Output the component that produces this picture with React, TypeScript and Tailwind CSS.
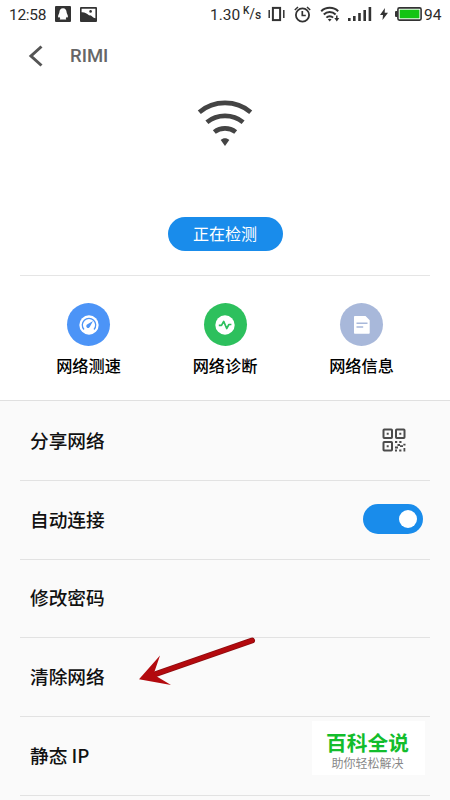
import React from 'react';

function StatusBar() {
  return (
    <div className="flex h-7 items-center pl-[9px] pr-2 text-[#2b2b2b] font-['Roboto','Noto_Sans_CJK_SC',sans-serif]">
      <span className="w-[46px] pt-px text-[15.5px] leading-7 tracking-[-0.3px]">12:58</span>
      <svg className="h-4 w-4" viewBox="0 0 16 16">
        <rect width="16" height="16" rx="1" fill="#333" />
        <path d="M8 2.200c2.300 0 3.600 1.700 3.600 4 0 1.400 1.700 3 1.300 5-.2.7-.8 0-1.200-.5-.2.8-.5 1.300-1 1.700.8.5.8 1.200-.2 1.200h-5c-1 0-1-.7-.2-1.200-.5-.4-.8-.9-1-1.700-.4.5-1 1.200-1.200.5-.4-2 1.300-3.600 1.300-5 0-2.300 1.300-4 3.600-4z" fill="#fff" />
      </svg>
      <svg className="ml-[9px] h-[15px] w-[17px]" viewBox="0 0 17 15">
        <rect width="17" height="15" rx="1" fill="#333" />
        <path d="M1.600 1.700h13.800v9.600C12.500 11 11.500 7.500 9.300 8.500 7 6.500 4.500 5 1.600 5.300z" fill="#fff" />
        <circle cx="10.600" cy="4.400" r="1.300" fill="#333" />
      </svg>
      <div className="ml-auto flex items-center">
        <span className="w-[33px] pt-px text-[15.5px] leading-7">1.30</span>
        <span className="flex w-[25px] text-[10px] leading-7">
          <span className="-translate-y-[3px] font-medium">K</span>
          <span className="text-[14px]">/</span>
          <span className="translate-y-[1px] text-[12px] font-medium">s</span>
        </span>
        <svg className="h-4 w-[17px]" viewBox="0 0 17 16" fill="none" stroke="#333">
          <rect x="4.900" y="1.900" width="7.200" height="12.200" strokeWidth="2" />
          <path d="M1.200 4v8M15.800 4v8" strokeWidth="1.500" />
        </svg>
        <svg className="ml-[9px] h-[17px] w-[17px]" viewBox="0 0 17 17" fill="none" stroke="#333">
          <circle cx="8.500" cy="9" r="6.600" strokeWidth="1.800" />
          <path d="M8.300 5v4.500h3.500" strokeWidth="1.700" />
          <path d="M.8 4 4 1M16.200 4 13 1" strokeWidth="1.500" />
        </svg>
        <svg className="ml-[9px] h-4 w-[21px]" viewBox="0 0 21 16" fill="none" stroke="#333">
          <path d="M1.200 5.200c4.600-4.600 12.400-4.600 17 0M3.800 8.500c3.300-3.300 8.500-3.300 11.800 0M6.400 11.600c1.900-1.900 4.800-1.900 6.700 0" strokeWidth="2" />
          <path d="m7.800 13.300 1.900 2.300 1.900-2.300q-1.900-1.300-3.800 0z" fill="#333" stroke="none" />
          <path d="M16.800 9.500v3.500" strokeWidth="1.500" />
          <path d="M14.300 12h5l-2.500 3.400z" fill="#333" stroke="none" />
        </svg>
        <svg className="ml-[7px] h-[14px] w-6" viewBox="0 0 24 14" fill="#333">
          <rect x="0" y="11" width="2.600" height="3" />
          <rect x="5" y="9" width="2.600" height="5" />
          <rect x="10.200" y="6" width="2.600" height="8" />
          <rect x="15.400" y="3" width="2.600" height="11" />
          <rect x="20.600" y="0" width="2.600" height="14" />
        </svg>
        <svg className="ml-[8px] h-3 w-2" viewBox="0 0 8 12" fill="#333">
          <path d="M4.900 0 0 7h3L2.500 12 8 4.700H4.700z" />
        </svg>
        <svg className="ml-[7px] h-[14px] w-[27px]" viewBox="0 0 27 14">
          <rect x="0" y="4" width="3" height="6" rx="1" fill="#333" />
          <rect x="2.900" y=".9" width="23.200" height="12.200" rx="1.500" fill="#fff" stroke="#333" strokeWidth="1.600" />
          <rect x="4.700" y="2.700" width="19.700" height="8.600" fill="#13c413" />
        </svg>
        <span className="ml-[2px] w-[18px] pt-px text-[15.5px] leading-7">94</span>
      </div>
    </div>
  );
}

function WifiIcon() {
  return (
    <svg className="h-12 w-14" viewBox="0 0 56 48" fill="none" stroke="#444" strokeWidth="4.700">
      <path d="M2.300 12.200C17-.2 39-.2 53.700 12.200" />
      <path d="M9.900 22.300c10.300-8.500 25.900-8.500 36.200 0" />
      <path d="M17.300 32c6.300-4.900 15.100-4.900 21.400 0" />
      <path d="M23.700 40c2.400-2.300 6.200-2.300 8.600 0L28 46z" fill="#444" stroke="none" />
    </svg>
  );
}

function SpeedIcon() {
  return (
    <svg className="h-5 w-5" viewBox="0 0 20 20" fill="none">
      <circle cx="10" cy="10" r="9.700" fill="#fff" />
      <path d="M5 14.500A6.700 6.700 0 1 1 15 14.500" stroke="#4c94f7" strokeWidth="1.300" />
      <path d="m14 5.900-3 5.700a1.900 1.900 0 1 1-2.500-2.300z" fill="#4c94f7" />
    </svg>
  );
}

function DiagnoseIcon() {
  return (
    <svg className="h-5 w-5" viewBox="0 0 20 20" fill="none">
      <circle cx="10" cy="10" r="9.700" fill="#fff" />
      <path d="M3.800 10.400h2.700l2.200-4 3 7.100 2.200-4h2.500" stroke="#2dc05d" strokeWidth="1.700" strokeLinejoin="round" />
    </svg>
  );
}

function InfoIcon() {
  return (
    <svg className="h-5 w-5" viewBox="0 0 20 20" fill="none">
      <path d="M2.800 1h10.700l4.200 4.300V18a.8.8 0 0 1-.8.800H2.800A.8.800 0 0 1 2 18V1.800A.8.800 0 0 1 2.800 1z" fill="#fff" />
      <path d="M4.500 8.300h11M4.500 12h6.700" stroke="#a8b8da" strokeWidth="1.500" />
    </svg>
  );
}

function QrIcon() {
  return (
    <svg className="h-6 w-6" viewBox="0 0 24 24" fill="none" stroke="#4b4b4b" strokeWidth="2">
      <rect x="1.500" y="1.500" width="8.500" height="8.500" rx=".7" />
      <rect x="14" y="1.500" width="8.500" height="8.500" rx=".7" />
      <rect x="1.500" y="14" width="8.500" height="8.500" rx=".7" />
      <path d="M4.700 5.700h2M17.300 5.700h2M4.700 18.200h2" />
      <path d="M13 14h2.200M17.300 14h2.200M21.300 16.700h2.200M15.500 17h2.500M18 18.200h3M13 19.500h3M13 22.500h2M17.200 22.500h2.200M22.400 20v3.500" strokeWidth="1.800" />
    </svg>
  );
}

const tools = [
  { label: '网络测速', color: 'bg-[#4c94f7]', icon: <SpeedIcon /> },
  { label: '网络诊断', color: 'bg-[#2dc05d]', icon: <DiagnoseIcon /> },
  { label: '网络信息', color: 'bg-[#a8b8da]', icon: <InfoIcon /> },
];

interface RowProps {
  label: string;
  children?: React.ReactNode;
}

function Row({ label, children }: RowProps) {
  return (
    <div className="mx-5 flex h-[78.8px] items-center justify-between border-b border-[#e2e2e2] pb-[2px] pl-[10px]">
      <span className="text-[18.7px] font-medium leading-7 text-[#111]">{label}</span>
      {children}
    </div>
  );
}

export default function App() {
  return (
    <div className="relative h-[800px] w-[450px] overflow-hidden bg-white font-['Noto_Sans_CJK_SC',sans-serif]">
      <StatusBar />

      <header className="flex h-14 items-center pl-7">
        <svg className="h-[22px] w-4" viewBox="0 0 16 22" fill="none" stroke="#555" strokeWidth="3">
          <path d="M13.500 1.500 3 11l10.500 9.500" />
        </svg>
        <h1 className="ml-[26px] font-['Roboto',sans-serif] text-[18.5px] font-medium leading-7 text-[#666]">RIMI</h1>
      </header>

      <div className="flex flex-col items-center pt-4">
        <WifiIcon />
        <button className="mt-[69px] h-[34px] w-[115px] rounded-full bg-[#198ceb] pb-px text-base leading-[33px] text-white">
          正在检测
        </button>
      </div>

      <div className="mx-5 mt-[24px] flex h-[125px] justify-between border-t border-[#e5e5e5] px-9 pt-[27px]">
        {tools.map((tool) => (
          <div key={tool.label} className="flex w-[65px] flex-col items-center">
            <div className={`flex h-[43px] w-[43px] items-center justify-center rounded-full ${tool.color}`}>{tool.icon}</div>
            <span className="mt-[5px] whitespace-nowrap text-[16.2px] font-medium leading-7 text-black">{tool.label}</span>
          </div>
        ))}
      </div>

      <div className="h-[400px] border-t border-[#e0e0e0] bg-[#fafafa] pt-px">
        <Row label="分享网络">
          <span className="mr-6"><QrIcon /></span>
        </Row>
        <Row label="自动连接">
          <div className="mr-[7px] flex h-[30px] w-[60px] items-center justify-end rounded-full bg-[#198ceb] pr-[6px]">
            <div className="h-[18px] w-[18px] rounded-full bg-white" />
          </div>
        </Row>
        <Row label="修改密码" />
        <Row label="清除网络" />
        <Row label="静态 IP" />
      </div>

      {/* arrow pointing at the forget network row */}
      <svg className="absolute left-[136px] top-[634px] h-[56px] w-[124px]" viewBox="136 634 124 56">
        <path d="M252 640.500 153 675" stroke="#8d0d10" strokeWidth="6" strokeLinecap="round" />
        <path d="M252 640.500 153 675" stroke="#b30a0e" strokeWidth="4.500" strokeLinecap="round" />
        <path d="M139 679.300 160 655.500 153.500 674.500 171 685z" fill="#b30a0e" />
      </svg>

      {/* watermark */}
      <div className="absolute left-[312px] top-[721px] flex h-[54px] w-[113px] flex-col items-center bg-white pr-[2px] pt-[8px]">
        <span className="text-[20.7px] font-bold leading-[26px] text-[#13bd2c]">百科全说</span>
        <span className="text-[12px] leading-[16px] text-[#888]">助你轻松解决</span>
      </div>
    </div>
  );
}
